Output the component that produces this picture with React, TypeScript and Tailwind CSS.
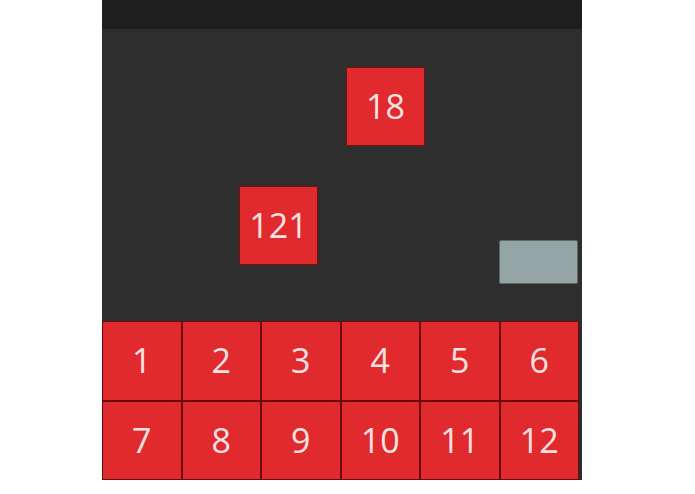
export default function App() {
  const cells = [1, 2, 3, 4, 5, 6, 7, 8, 9, 10, 11, 12];

  return (
    <div className="w-[695px] h-[494px] bg-white" style={{ fontFamily: "'Open Sans', 'Noto Sans', sans-serif" }}>
      <div className="ml-[102px] w-[480px] h-[480px] flex flex-col bg-[#2e2e2e]">
        {/* barra superior */}
        <div className="h-[29px] bg-[#1e1e1e] shrink-0" />

        {/* tablero libre */}
        <div className="relative flex-1">
          <div className="absolute left-[244px] top-[38px] w-[79px] h-[79px] bg-[#e12a2e] border border-[#7a1010] flex items-center justify-center text-[34px] text-[#f6e2e2]">
            18
          </div>
          <div className="absolute left-[137px] top-[157px] w-[79px] h-[79px] bg-[#e12a2e] border border-[#7a1010] flex items-center justify-center text-[34px] text-[#f6e2e2]">
            121
          </div>
          <div className="absolute left-[397px] top-[211px] w-[79px] h-[44px] bg-[#95a5a5] border border-[#5d6868] rounded-[2px]" />
        </div>

        {/* teclado */}
        <div className="w-[477px] grid grid-cols-6 shrink-0">
          {cells.map((n) => (
            <div
              key={n}
              className="h-[79.5px] bg-[#e12a2e] border border-[#6b0a0a] flex items-center justify-center text-[34px] text-[#f6e2e2]"
            >
              {n}
            </div>
          ))}
        </div>
      </div>
    </div>
  );
}
